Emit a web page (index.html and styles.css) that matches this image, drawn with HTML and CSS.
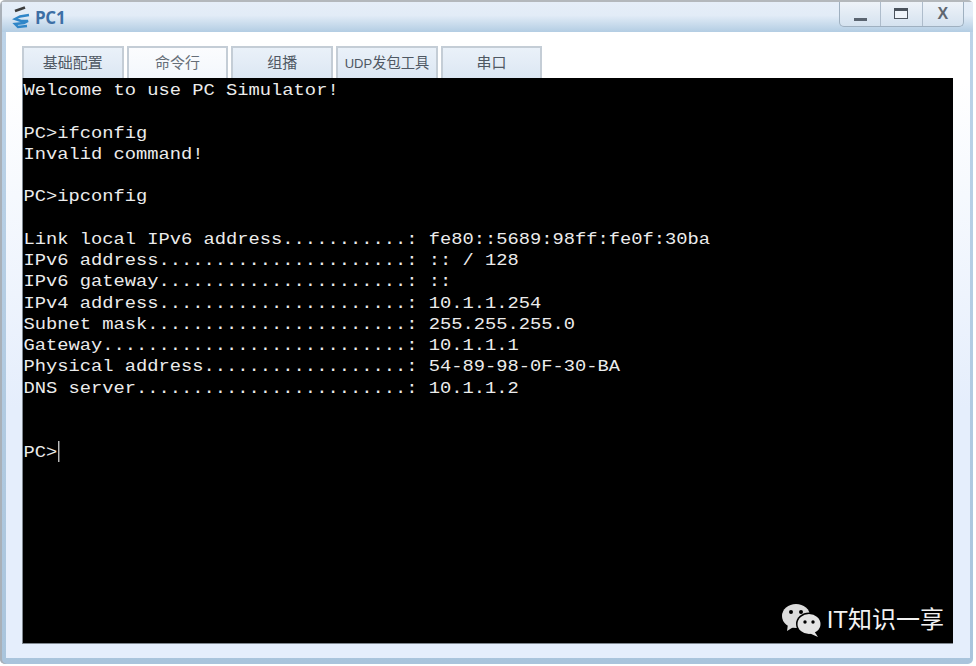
FILE: index.html
```html
<!DOCTYPE html>
<html lang="zh">
<head>
<meta charset="utf-8">
<title>PC1</title>
<link rel="stylesheet" href="styles.css">
</head>
<body>
<div class="window">
  <header class="titlebar">
    <svg class="app-icon" width="20" height="24" viewBox="0 0 20 24">
      <path d="M3 6 L13 2.5" stroke="#3c3c3c" stroke-width="2.6" fill="none"/>
      <path d="M17 10 L8 11.5 L3 14 L9 16 L16 16 L12 18 L3 19 L6 22 L15 21" stroke="#2f86c8" stroke-width="2.4" fill="none"/>
    </svg>
    <span class="title">PC1</span>
    <div class="controls">
      <div class="ctl"><span class="ico-min"></span></div>
      <div class="ctl"><span class="ico-max"></span></div>
      <div class="ctl ctl-x">X</div>
    </div>
  </header>
  <main class="panel">
    <nav class="tabs">
      <div class="tab">基础配置</div>
      <div class="tab active">命令行</div>
      <div class="tab">组播</div>
      <div class="tab tab-tight"><span class="latin">UDP</span>发包工具</div>
      <div class="tab">串口</div>
    </nav>
    <div class="terminal">
<pre class="console">Welcome to use PC Simulator!

PC&gt;ifconfig
Invalid command!

PC&gt;ipconfig

Link local IPv6 address...........: fe80::5689:98ff:fe0f:30ba
IPv6 address......................: :: / 128
IPv6 gateway......................: ::
IPv4 address......................: 10.1.1.254
Subnet mask.......................: 255.255.255.0
Gateway...........................: 10.1.1.1
Physical address..................: 54-89-98-0F-30-BA
DNS server........................: 10.1.1.2


PC&gt;<span class="caret"></span></pre>
      <div class="watermark">
        <svg width="42" height="34" viewBox="0 0 42 34">
          <ellipse cx="15" cy="13" rx="14" ry="12" fill="#dcdcdc"/>
          <path d="M7 21 L6 28 L14 23 Z" fill="#dcdcdc"/>
          <circle cx="10" cy="9" r="2" fill="#000"/>
          <circle cx="20" cy="9" r="2" fill="#000"/>
          <ellipse cx="28" cy="21" rx="13" ry="11.5" fill="#000"/>
          <ellipse cx="28" cy="21" rx="11.5" ry="10" fill="#e4e4e4"/>
          <path d="M33 28 L37 34 L28 30 Z" fill="#e4e4e4"/>
          <circle cx="24" cy="19" r="1.7" fill="#000"/>
          <circle cx="32" cy="19" r="1.7" fill="#000"/>
        </svg>
        <span class="wm-text">IT知识一享</span>
      </div>
    </div>
  </main>
</div>
</body>
</html>
```
FILE: styles.css
```css
html, body {
  margin: 0;
  padding: 0;
  background: #fff;
}
body {
  width: 976px;
  height: 666px;
  overflow: hidden;
}
.window {
  width: 973px;
  height: 664px;
  box-sizing: border-box;
  display: flex;
  flex-direction: column;
  padding: 0 3px 6px 6px;
  border-radius: 5px;
  border-top: 2px solid #b4b8bc;
  box-shadow: inset 2px 0 0 #a9b0b8;
  background: linear-gradient(#dbe7f4 0, #bcd3e8 32px, #a9c4dc 100%);
}
.titlebar {
  height: 30px;
  flex: none;
  display: flex;
  align-items: center;
  margin: 0 -3px 0 -4px;
  padding-left: 10px;
  background: linear-gradient(#e6eef8, #e2ecf7 45%, #b3cde3);
}
.app-icon {
  flex: none;
  margin-right: 3px;
}
.title {
  font: bold 17px "Open Sans", "Liberation Sans", sans-serif;
  color: #3d6fa5;
  letter-spacing: -0.3px;
}
.controls {
  margin-left: auto;
  margin-right: 9px;
  margin-top: -6px;
  display: flex;
  width: 123px;
  height: 24px;
  border: 1px solid #9fb0c0;
  border-top: 0;
  border-radius: 0 0 5px 5px;
  background: linear-gradient(#eef3f9, #d5e2ef);
  box-sizing: content-box;
}
.ctl {
  flex: 1;
  display: flex;
  align-items: center;
  justify-content: center;
  border-left: 1px solid #aebccb;
}
.ctl:first-child {
  border-left: 0;
}
.ctl-x {
  font: bold 16px "Liberation Sans", sans-serif;
  color: #5f6670;
}
.ico-min {
  display: block;
  width: 13px;
  height: 3px;
  margin-top: 12px;
  background: #5a6470;
}
.ico-max {
  display: block;
  width: 12px;
  height: 7px;
  border: 1px solid #4a525c;
  border-top-width: 3px;
  background: #eef3f9;
}
.panel {
  flex: 1;
  min-height: 0;
  display: flex;
  flex-direction: column;
  padding: 14px 17px 14px 16px;
  background: linear-gradient(#fff 0, #fff 8%, #e5eefc 60%);
}
.tabs {
  display: flex;
  gap: 3px;
  height: 32px;
  flex: none;
}
.tab {
  width: 101.7px;
  box-sizing: border-box;
  padding-top: 3px;
  text-align: center;
  font: 15px "Noto Sans CJK SC", "Liberation Sans", sans-serif;
  line-height: 22px;
  color: #4f5863;
  border: 2px solid #c4cdd6;
  border-bottom: 0;
  background: linear-gradient(#eaf1f9, #dce7f3);
}
.tab.active {
  background: linear-gradient(#fbfcfe, #f3f7fc);
  color: #666e78;
}
.tab-tight {
  font-size: 14.25px;
}
.latin {
  font: 13px "Liberation Sans", sans-serif;
}
.terminal {
  position: relative;
  flex: 1;
  min-height: 0;
  background: #000;
  border: 1px solid #808890;
  border-top: 0;
  border-right: 0;
  overflow: hidden;
}
.console {
  margin: 0;
  padding: 2px 0 0 0.5px;
  font: 16.5px/21.25px "Liberation Mono", "Courier New", monospace;
  color: #ececec;
  transform: scaleX(1.1364);
  transform-origin: left top;
}
.caret {
  display: inline-block;
  width: 1px;
  height: 21px;
  margin-left: 1px;
  vertical-align: -5px;
  background: #f0f0f0;
}
.watermark {
  position: absolute;
  right: 9px;
  bottom: 6px;
  display: flex;
  align-items: center;
  gap: 4px;
}
.wm-text {
  font: 24px/30px "Liberation Sans", "Noto Sans CJK SC", sans-serif;
  color: #f2f2f2;
}
```
